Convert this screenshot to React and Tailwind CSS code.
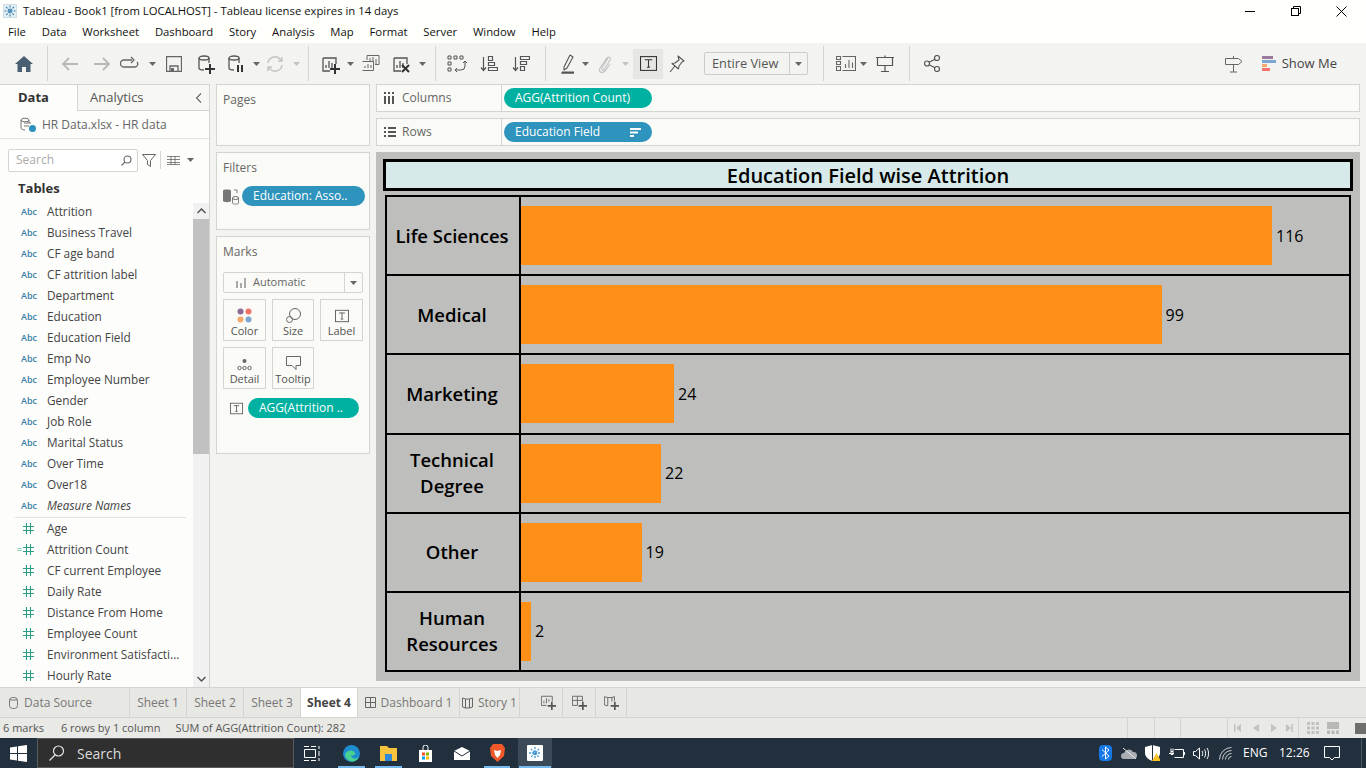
import React from "react";

const FIELDS_TOP = ["Attrition", "Business Travel", "CF age band", "CF attrition label", "Department", "Education", "Education Field", "Emp No", "Employee Number", "Gender", "Job Role", "Marital Status", "Over Time", "Over18", "Measure Names"];
const FIELDS_BOTTOM = ["Age", "Attrition Count", "CF current Employee", "Daily Rate", "Distance From Home", "Employee Count", "Environment Satisfacti...", "Hourly Rate"];
const MENU = ["File", "Data", "Worksheet", "Dashboard", "Story", "Analysis", "Map", "Format", "Server", "Window", "Help"];
const ROWS = [
  { label: ["Life Sciences"], value: 116 },
  { label: ["Medical"], value: 99 },
  { label: ["Marketing"], value: 24 },
  { label: ["Technical", "Degree"], value: 22 },
  { label: ["Other"], value: 19 },
  { label: ["Human", "Resources"], value: 2 },
];

/* ---------- small drawing helpers ---------- */
const Ico = ({ w = 20, h = 20, c = "#666", sw = 1.3, children }) => (
  <svg width={w} height={h} viewBox={`0 0 ${w} ${h}`} fill="none" stroke={c} strokeWidth={sw}>
    {children}
  </svg>
);

const Caret = ({ c = "#666" }) => (
  <svg width="7" height="4" viewBox="0 0 7 4"><path d="M0 0h7L3.5 4z" fill={c} /></svg>
);

const Tool = ({ className, children }) => (
  <div className={`flex h-full shrink-0 items-center justify-center ${className}`}>{children}</div>
);

const Sep = () => <div className="h-[35px] w-px shrink-0 bg-[#d4d4d0]" />;

const Cyl = ({ x = 3 }) => (
  <>
    <ellipse cx={x + 5} cy="4" rx="5" ry="2" />
    <path d={`M${x} 4v10c0 1 2 2 5 2M${x + 10} 4v5`} />
  </>
);

const Plus = ({ x, y, c = "#333" }) => <path d={`M${x - 5} ${y}h10M${x} ${y - 5}v10`} stroke={c} strokeWidth="2" />;

const Bars = ({ x = 3, y = 4 }) => (
  <path d={`M${x} ${y}v13h7M${x} ${y}h13v6M${x + 3} ${y + 10}v-3M${x + 6} ${y + 10}v-7M${x + 9} ${y + 10}v-5`} />
);

const TBox = ({ s = 16, c = "#555" }) => (
  <svg width={s} height={s} viewBox="0 0 16 16" fill="none" stroke={c}>
    <rect x="0.5" y="1.5" width="15" height="13" />
    <path d="M5 5V4.500h6V5M8 4.500v7M6.500 11.500h3" />
  </svg>
);

const Hash = () => (
  <svg width="11" height="11" viewBox="0 0 11 11" stroke="#2d9c86" strokeWidth="1.1">
    <path d="M3.500 0v11M7.500 0v11M0 3.500h11M0 7.500h11" />
  </svg>
);

/* ---------- top chrome ---------- */
const TitleBar = () => (
  <div className="flex h-[22px] items-center bg-[#fffffc] pl-[3px] text-[11.3px] text-[#111]">
    <svg width="14" height="14" viewBox="0 0 14 14" stroke="#2f7fae" strokeWidth="1.1">
      <rect x="0.500" y="0.500" width="13" height="13" fill="#e4eef5" stroke="#cfdde8" />
      <path d="M7 1.500v11M1.500 7h11M3 3l8 8M11 3l-8 8" strokeDasharray="2 1" />
    </svg>
    <span className="ml-[6px]">Tableau - Book1 [from LOCALHOST] - Tableau license expires in 14 days</span>
    <div className="ml-auto flex items-center">
      <div className="mr-[36px] h-px w-[10px] bg-black" />
      <svg width="10" height="10" viewBox="0 0 10 10" fill="none" stroke="#000" className="mr-[35px]">
        <rect x="0.500" y="2.500" width="7" height="7" />
        <path d="M2.500 2.500v-2h7v7h-2" />
      </svg>
      <svg width="11" height="11" viewBox="0 0 11 11" stroke="#000" className="mr-[19px]"><path d="M0.500 0.500l10 10M10.500 0.500l-10 10" /></svg>
    </div>
  </div>
);

const MenuBar = () => (
  <div className="flex h-[21px] items-center gap-[15.8px] bg-[#fffffc] pl-[8px] text-[11.3px] text-[#111]">
    {MENU.map((m) => <span key={m}>{m}</span>)}
  </div>
);

const Toolbar = () => (
  <div className="flex h-[41px] items-center bg-[#f3f3f1]">
    <Tool className="w-[47px]">
      <svg width="18" height="16" viewBox="0 0 18 16"><path d="M9 0L0 8h2.500v8H7v-5h4v5h4.500V8H18z" fill="#4a6072" /></svg>
    </Tool>
    <Sep />
    <Tool className="w-[44px]">
      <Ico c="#b8b8b8" sw="1.800"><path d="M18 10H3M9 4l-6 6 6 6" /></Ico>
    </Tool>
    <Tool className="w-[20px]">
      <Ico c="#b8b8b8" sw="1.800"><path d="M2 10h15M11 4l6 6-6 6" /></Ico>
    </Tool>
    <Tool className="w-[36px]">
      <Ico><path d="M12 6H4a3 3 0 000 7h11a3 3 0 002-5M11 3l3 3-3 3" /></Ico>
    </Tool>
    <Tool className="w-[8px]"><Caret /></Tool>
    <Tool className="w-[36px]">
      <Ico w={16} h={16}><path d="M.5.500h15v15H.5zM4 15.500V10h8v5.500" /><rect x="5" y="12" width="3" height="3.500" fill="#666" stroke="none" /></Ico>
    </Tool>
    <Tool className="w-[28px]">
      <Ico c="#555"><Cyl /><Plus x={14} y={15} /></Ico>
    </Tool>
    <Tool className="w-[32px]">
      <Ico c="#555"><Cyl /><path d="M12 11v7M16 11v7" stroke="#333" strokeWidth="2" /></Ico>
    </Tool>
    <Tool className="w-[8px]"><Caret /></Tool>
    <Tool className="w-[30px]">
      <Ico c="#c4c4c4" sw="1.500"><path d="M3 9a7 7 0 0112-4l2 2M17 11a7 7 0 01-12 4l-2-2M17 3v4h-4M3 17v-4h4" /></Ico>
    </Tool>
    <Tool className="w-[12px]"><Caret c="#c4c4c4" /></Tool>
    <Tool className="w-[6px]" />
    <Sep />
    <Tool className="w-[37px] justify-end pr-[4px]">
      <Ico w={22} h={20} c="#555"><Bars /><Plus x={15} y={15} /></Ico>
    </Tool>
    <Tool className="w-[8px]"><Caret /></Tool>
    <Tool className="w-[34px]">
      <Ico w={18} h={18} c="#666" sw="1"><path d="M5 5V.5h12v9h-4M.5 6.500h11v9H.5M8 6V3M11 7V2M14 9V4M3 13v-2M6 13v-4M9 13v-3" /></Ico>
    </Tool>
    <Tool className="w-[28px]">
      <Ico w={22} h={20} c="#555"><Bars /><path d="M11 11l7 7M18 11l-7 7" stroke="#333" strokeWidth="2" /></Ico>
    </Tool>
    <Tool className="w-[12px]"><Caret /></Tool>
    <Tool className="w-[7px]" />
    <Sep />
    <Tool className="w-[42px]">
      <Ico w={20} h={18} c="#555" sw="1"><path d="M1 1h3v3H1zM7 1h3v3H7zM13 1h3v3h-3zM1 7h3v3H1zM1 13h3v3H1zM18 6v5a4 4 0 01-4 4H8M10 13l-2 2 2 2M16 8l2-2 2 2" /></Ico>
    </Tool>
    <Tool className="w-[22px]">
      <Ico w={18} h={18} c="#555" sw="1.200"><path d="M3.500 2v13M1 12.500l2.500 3 2.500-3M8.500 1.500h4v4h-4zM8.500 7.500h6v3h-6zM8.500 12.500h9v3h-9z" /></Ico>
    </Tool>
    <Tool className="w-[42px]">
      <Ico w={18} h={18} c="#555" sw="1.200"><path d="M3.500 2v13M1 12.500l2.500 3 2.500-3M8.500 1.500h9v3h-9zM8.500 6.500h6v3h-6zM8.500 11.500h4v4h-4z" /></Ico>
    </Tool>
    <Tool className="w-[3px]" />
    <Sep />
    <Tool className="w-[35px] justify-end pr-[6px]">
      <Ico w={14} h={20} c="#555" sw="1.100"><path d="M3 13L9 1l3 2-6 11-3 2zM0 19h13" strokeLinejoin="round" /><path d="M1 18.500h12" strokeWidth="2" /></Ico>
    </Tool>
    <Tool className="w-[8px]"><Caret /></Tool>
    <Tool className="w-[32px]">
      <Ico w={14} h={18} c="#c4c4c4" sw="1.200"><path d="M10 3L4 13c-1 2 1 3 2 2l6-10c1-2-1-4-3-2L2 13c-2 4 2 6 5 3l5-7" /></Ico>
    </Tool>
    <Tool className="w-[8px]"><Caret c="#c4c4c4" /></Tool>
    <Tool className="ml-[4px] !h-[30px] w-[30px] bg-[#e6e6e3]">
      <TBox s={17} c="#333" />
    </Tool>
    <Tool className="w-[28px]">
      <Ico w={16} h={18} c="#555" sw="1.100"><path d="M9 1l6 5-2 1-3 4-.5 3L3 8.500l3-.5 4-3zM6 11l-5 6" strokeLinejoin="round" /></Ico>
    </Tool>
    <div className="ml-[13px] flex h-[23px] w-[104px] shrink-0 items-center rounded-[2px] border border-[#ccc] text-[12.8px] text-[#555]">
      <span className="flex-1 pl-[7px]">Entire View</span>
      <span className="flex h-full w-[18px] items-center justify-center border-l border-[#ccc]"><Caret /></span>
    </div>
    <div className="w-[15px] shrink-0" />
    <Sep />
    <Tool className="w-[32px] justify-end">
      <Ico w={20} h={15} c="#666" sw="1"><path d="M.5.500h4v3h-4zM.5 5.500h4v3h-4zM.5 10.500h4v4h-4zM6.500.500h13v14h-13M9.500 12V8M13 12V4M16.500 12V6.500" strokeWidth="1.100" /></Ico>
    </Tool>
    <Tool className="w-[11px] justify-end"><Caret /></Tool>
    <Tool className="w-[36px]">
      <Ico w={18} h={18} c="#555" sw="1.200"><path d="M0 2.500h18M1.500 2.500v8h15v-8M9 .5v2M9 10.500v6M5 16.500h8" /></Ico>
    </Tool>
    <div className="w-[6px] shrink-0" />
    <Sep />
    <Tool className="w-[44px]">
      <Ico w={16} h={17} c="#555" sw="1.200"><circle cx="3" cy="8.500" r="2.500" /><circle cx="13" cy="3" r="2.500" /><circle cx="13" cy="14" r="2.500" /><path d="M5 7.200l6-3M5 9.800l6 3" /></Ico>
    </Tool>
    <div className="ml-auto mr-[29px] flex items-center">
      <Ico w={18} h={18} c="#666" sw="1"><path d="M.5 3.500h13l3.500 3-3.500 3H.5zM8.500 1v2.500M8.500 9.500V17M5 17h7" /></Ico>
      <svg width="14" height="16" viewBox="0 0 14 16" className="ml-[19px]">
        <rect y="0" width="11" height="3" fill="#9b7a9e" />
        <rect y="4" width="14" height="3" fill="#7ca6d2" />
        <rect y="8" width="5" height="3" fill="#f5a76c" />
        <rect y="12" width="8" height="3" fill="#f27469" />
      </svg>
      <span className="ml-[6px] text-[13px] text-[#444]">Show Me</span>
    </div>
  </div>
);

/* ---------- data pane ---------- */
const FieldRow = ({ name, type, italic }) => (
  <div className="flex h-[21px] items-center text-[11.8px] text-[#444]">
    {type === "abc" ? (
      <div className="flex w-[47px] shrink-0 items-center justify-end pr-[10px]">
        <span className="text-[9px] font-semibold text-[#3b7ea8]">Abc</span>
      </div>
    ) : (
      <div className="flex w-[47px] shrink-0 items-center justify-end pr-[13px]">
        {type === "calc" && <span className="mr-px text-[9px] leading-none text-[#2d9c86]">=</span>}
        <Hash />
      </div>
    )}
    <span className={italic ? "italic" : ""}>{name}</span>
  </div>
);

const DataPane = () => (
  <div className="flex h-full w-[210px] shrink-0 flex-col border-r border-t border-[#d4d4d0] bg-[#fdfdfb]">
    <div className="flex h-[26px] shrink-0 items-stretch text-[13px]">
      <div className="flex w-[78px] items-center border-r border-[#d4d4d0] pl-[18px] font-bold text-[#333]">Data</div>
      <div className="flex flex-1 items-center justify-between border-b border-[#d4d4d0] bg-[#f7f7f4] pl-[12px] pr-[7px] text-[#555]">
        <span>Analytics</span>
        <svg width="7" height="10" viewBox="0 0 7 10" fill="none" stroke="#666" strokeWidth="1.100"><path d="M6 .5L1.500 5 6 9.500" /></svg>
      </div>
    </div>
    <div className="flex h-[28px] shrink-0 items-center border-b border-[#e2e2de] pl-[20px] text-[12px] text-[#666]">
      <svg width="17" height="16" viewBox="0 0 17 16" fill="none" stroke="#666" strokeWidth="0.900">
        <ellipse cx="5" cy="3" rx="4" ry="1.800" />
        <path d="M1 3v8c0 1 2 2 4 2M9 3v3M4 6h7M4 9h5" />
        <circle cx="12.500" cy="11.500" r="3.500" fill="#2f8fbd" stroke="none" />
      </svg>
      <span className="ml-[5px]">HR Data.xlsx - HR data</span>
    </div>
    <div className="flex h-[40px] shrink-0 items-center pl-[8px] pt-[2px]">
      <div className="flex h-[23px] w-[130px] items-center justify-between rounded-[2px] border border-[#d4d4d0] bg-white pl-[7px] pr-[5px] text-[12px] text-[#aaa]">
        <span>Search</span>
        <svg width="11" height="11" viewBox="0 0 11 11" fill="none" stroke="#666" strokeWidth="1.100"><circle cx="6.500" cy="4.500" r="3.500" /><path d="M4 7L.5 10.500" /></svg>
      </div>
      <svg width="14" height="13" viewBox="0 0 14 13" fill="none" stroke="#666" className="ml-[4px]"><path d="M.5.500h13L8.500 6.500v6l-3-2v-4z" /></svg>
      <div className="ml-[4px] h-[18px] w-px bg-[#d4d4d0]" />
      <svg width="13" height="9" viewBox="0 0 13 9" stroke="#666" className="ml-[6px]"><path d="M0 .5h13M0 3.500h13M0 6.500h13M0 8.500h13M4 0v9M8 0v9" strokeWidth="0.800" /></svg>
      <span className="ml-[7px]"><Caret /></span>
    </div>
    <div className="flex min-h-0 flex-1">
      <div className="min-w-0 flex-1 overflow-hidden">
        <div className="h-[22px] pl-[18px] text-[13px] font-bold leading-[18px] text-[#333]">Tables</div>
        <div>
          {FIELDS_TOP.map((f, i) => <FieldRow key={f} name={f} type="abc" italic={i === 14} />)}
        </div>
        <div className="ml-[15px] mr-[7px] mt-px h-px bg-[#e2e2de]" />
        <div>
          {FIELDS_BOTTOM.map((f) => <FieldRow key={f} name={f} type={f === "Attrition Count" ? "calc" : "num"} />)}
        </div>
      </div>
      <div className="mt-[24px] flex w-[16px] shrink-0 flex-col bg-[#f1f1f1]">
        <div className="flex h-[16px] items-center justify-center"><svg width="9" height="6" viewBox="0 0 9 6" fill="none" stroke="#555" strokeWidth="1.500"><path d="M.5 5L4.500 1l4 4" /></svg></div>
        <div className="h-[235px] bg-[#c1c1c1]" />
        <div className="mt-auto flex h-[16px] items-center justify-center"><svg width="9" height="6" viewBox="0 0 9 6" fill="none" stroke="#555" strokeWidth="1.500"><path d="M.5 1l4 4 4-4" /></svg></div>
      </div>
    </div>
  </div>
);

/* ---------- cards ---------- */
const Card = ({ className, children }) => (
  <div className={`border border-[#d4d4d0] bg-[#fafaf6] ${className}`}>{children}</div>
);

const Pill = ({ color, className, children }) => (
  <div className={`flex h-[20px] items-center rounded-full pl-[11px] text-[12px] text-white ${color} ${className}`}>{children}</div>
);

const MarkBtn = ({ label, children }) => (
  <div className="flex h-[42px] flex-col items-center border border-[#d4d4d0] text-[11px] text-[#555]">
    <div className="flex h-[23px] items-end justify-center">{children}</div>
    <span className="mt-[1px] leading-[14px]">{label}</span>
  </div>
);

const CardsColumn = () => (
  <div className="flex w-[154px] shrink-0 flex-col gap-[6px]">
    <Card className="h-[62px] pl-[6px] pt-[6px] text-[12px] text-[#666]">Pages</Card>
    <Card className="h-[78px] px-[6px] pt-[6px] text-[12px] text-[#666]">
      <div>Filters</div>
      <div className="mt-[9px] flex items-center">
        <svg width="17" height="17" viewBox="0 0 17 17" fill="none" stroke="#666" className="mr-[2px] shrink-0">
          <path d="M0 2.500C0 1 8 1 8 2.500V13C8 14.500 0 14.500 0 13z" fill="#777" stroke="none" />
          <ellipse cx="12.500" cy="10" rx="3" ry="1.500" />
          <path d="M9.500 10v5c0 1.500 6 1.500 6 0v-5M11 2h3v3" strokeWidth="0.800" />
        </svg>
        <Pill color="bg-[#2e93bd]" className="w-[123px] shrink-0">Education: Asso..</Pill>
      </div>
    </Card>
    <Card className="h-[218px] px-[6px] pt-[6px] text-[12px] text-[#666]">
      <div>Marks</div>
      <div className="mt-[11px] flex h-[21px] w-[140px] items-center rounded-[2px] border border-[#d4d4d0] text-[11px]">
        <svg width="10" height="10" viewBox="0 0 10 10" fill="#aaa" className="ml-[12px]"><rect y="3" width="2" height="7" /><rect x="4" y="5" width="2" height="5" /><rect x="8" y="0" width="2" height="10" /></svg>
        <span className="ml-[7px] flex-1">Automatic</span>
        <span className="flex h-full w-[18px] items-center justify-center border-l border-[#d4d4d0]"><Caret /></span>
      </div>
      <div className="mt-[6px] grid w-[140px] grid-cols-[43px_42px_43px] gap-x-[6px] gap-y-[6px]">
        <MarkBtn label="Color">
          <svg width="15" height="15" viewBox="0 0 15 15"><circle cx="3.500" cy="3.500" r="3" fill="#8d6a93" /><circle cx="11.500" cy="3.500" r="3" fill="#f27469" /><circle cx="3.500" cy="11.500" r="3" fill="#f5a76c" /><circle cx="11.500" cy="11.500" r="3" fill="#7ca6d2" /></svg>
        </MarkBtn>
        <MarkBtn label="Size">
          <svg width="15" height="15" viewBox="0 0 15 15" fill="none" stroke="#666"><circle cx="9" cy="6" r="5.500" /><circle cx="3.500" cy="11.500" r="3" /></svg>
        </MarkBtn>
        <MarkBtn label="Label"><TBox s={14} /></MarkBtn>
        <MarkBtn label="Detail">
          <svg width="15" height="12" viewBox="0 0 15 12" fill="none" stroke="#666"><circle cx="7.500" cy="2" r="2" fill="#666" stroke="none" /><circle cx="2.500" cy="9" r="1.700" /><circle cx="7.500" cy="9" r="1.700" /><circle cx="12.500" cy="9" r="1.700" /></svg>
        </MarkBtn>
        <MarkBtn label="Tooltip">
          <svg width="15" height="15" viewBox="0 0 15 15" fill="none" stroke="#666"><path d="M.5.500h14v9H10v4l-4-4H.5z" /></svg>
        </MarkBtn>
      </div>
      <div className="mt-[9px] flex items-center pl-[7px]">
        <TBox s={13} />
        <Pill color="bg-[#00b0a0]" className="ml-[5px] w-[111px]">AGG(Attrition ..</Pill>
      </div>
    </Card>
  </div>
);

/* ---------- shelves + viz ---------- */
const Shelf = ({ icon, label, className, children }) => (
  <Card className={`flex h-[28px] items-stretch ${className}`}>
    <div className="flex w-[125px] items-center border-r border-[#d4d4d0] text-[12px] text-[#666]">
      <span className="flex w-[25px] justify-center">{icon}</span>
      {label}
    </div>
    <div className="flex items-center pl-[2px]">{children}</div>
  </Card>
);

const Chart = () => (
  <div className="mt-[6px] flex h-[529px] flex-col bg-[#bebebc] px-[7px] pt-[7px] text-black">
    <div className="flex h-[32px] items-center justify-center border-[3px] border-black bg-[#d7eae9] pt-px text-[20px] font-semibold leading-none">
      Education Field wise Attrition
    </div>
    <div className="mx-[2px] mt-[4px] flex h-[477px] flex-col border-[2px] border-black">
      {ROWS.map((r, i) => (
        <div key={i} className={`flex flex-1 items-stretch ${i > 0 ? "border-t-[2px] border-black" : ""}`}>
          <div className="flex w-[132px] shrink-0 flex-col items-center justify-center pr-[2px] text-center text-[18.5px] font-semibold leading-[26px]">
            {r.label.map((l) => <span key={l}>{l}</span>)}
          </div>
          <div className="flex flex-1 items-center border-l-[2px] border-black">
            <div className="h-[59px] bg-[#ff8f17]" style={{ width: r.value * 6.5 - 3 }} />
            <span className="ml-[4px] text-[16px] font-medium leading-none">{r.value}</span>
          </div>
        </div>
      ))}
    </div>
  </div>
);

const Workspace = () => (
  <div className="ml-[6px] mr-[6px] flex min-w-0 flex-1 flex-col">
    <Shelf
      label="Columns"
      icon={<svg width="11" height="12" viewBox="0 0 11 12" fill="#555"><rect width="2" height="2" /><rect x="4" width="2" height="2" /><rect x="8" width="2" height="2" /><rect y="4" width="2" height="8" /><rect x="4" y="4" width="2" height="8" /><rect x="8" y="4" width="2" height="8" /></svg>}
    >
      <Pill color="bg-[#00b0a0]" className="w-[148px]">AGG(Attrition Count)</Pill>
    </Shelf>
    <Shelf
      className="mt-[6px]"
      label="Rows"
      icon={<svg width="12" height="10" viewBox="0 0 12 10" fill="#555"><rect width="2" height="2" /><rect x="4" width="8" height="2" /><rect y="4" width="2" height="2" /><rect x="4" y="4" width="8" height="2" /><rect y="8" width="2" height="2" /><rect x="4" y="8" width="8" height="2" /></svg>}
    >
      <Pill color="bg-[#2e93bd]" className="w-[148px]">
        <span className="flex-1">Education Field</span>
        <svg width="11" height="9" viewBox="0 0 11 9" fill="#fff" className="mr-[11px]"><rect width="11" height="2" /><rect y="3.500" width="8" height="2" /><rect y="7" width="4" height="2" /></svg>
      </Pill>
    </Shelf>
    <Chart />
  </div>
);

/* ---------- bottom ---------- */
const Tab = ({ className, active, children }) => (
  <div className={`flex h-full shrink-0 items-center justify-center gap-[5px] border-r border-[#d4d4d0] text-[12px] ${active ? "bg-white font-bold text-[#444]" : "text-[#777]"} ${className}`}>
    {children}
  </div>
);

const AddIcon = ({ children }) => (
  <svg width="15" height="15" viewBox="0 0 18 18" fill="none" stroke="#666" strokeWidth="1.100">
    {children}
    <Plus x={13} y={13} c="#555" />
  </svg>
);

const SheetTabs = () => (
  <div className="flex h-[30px] border-t border-[#d4d4d0] bg-[#e7e7e3]">
    <Tab className="w-[130px] !justify-start gap-[6px] pl-[9px]">
      <svg width="9" height="12" viewBox="0 0 9 12" fill="none" stroke="#777"><rect x="0.500" y="0.500" width="8" height="11" rx="3" /><path d="M.5 3h8" /></svg>
      Data Source
    </Tab>
    <Tab className="w-[57px]">Sheet 1</Tab>
    <Tab className="w-[57px]">Sheet 2</Tab>
    <Tab className="w-[57px]">Sheet 3</Tab>
    <Tab className="w-[57px]" active>Sheet 4</Tab>
    <Tab className="w-[102px]">
      <svg width="11" height="11" viewBox="0 0 11 11" fill="none" stroke="#666"><path d="M.5.500h10v10H.5zM.5 5.500h10M5.500.5v10" /></svg>
      Dashboard 1
    </Tab>
    <Tab className="w-[60px]">
      <svg width="11" height="12" viewBox="0 0 11 12" fill="none" stroke="#666"><path d="M.5 1l3 1v9l-3-1zM3.500 2h4v9h-4M7.500 2l3-1v9l-3 1" /></svg>
      Story 1
    </Tab>
    <Tab className="w-[43px] pl-[14px]"><AddIcon><path d="M.5 1.500h13v6M.5 1.500v11h6M3.500 10V7M6.500 10V4M9.500 8V5" /></AddIcon></Tab>
    <Tab className="w-[33px]"><AddIcon><path d="M.5 1.500h12v6M.5 1.500v11h6M.5 6.500h12M6.500 1.500v11" /></AddIcon></Tab>
    <Tab className="w-[31px]"><AddIcon><path d="M.5 2l4 1v10l-4-1zM4.500 3h5v5M9.500 3l3-1v5" /></AddIcon></Tab>
  </div>
);

const StatusBar = () => (
  <div className="flex h-[21px] items-center border-t border-[#d4d4d0] bg-[#e9e9e5] pl-[3px] text-[11px] text-[#555]">
    <span>6 marks</span>
    <span className="ml-[17px]">6 rows by 1 column</span>
    <span className="ml-[15px]">SUM of AGG(Attrition Count): 282</span>
    <div className="ml-auto flex h-full items-stretch">
      <div className="w-[27px] border-l border-[#d4d4d0]" />
      <div className="w-[26px] border-l border-[#d4d4d0]" />
      <div className="w-[47px] border-l border-[#d4d4d0]" />
      <div className="flex w-[71px] items-center justify-center gap-[9px] border-l border-[#d4d4d0]">
        <svg width="7" height="8" viewBox="0 0 7 8" fill="#c2c2be"><rect width="1.500" height="8" /><path d="M7 0v8L2 4z" /></svg>
        <svg width="6" height="8" viewBox="0 0 6 8" fill="#c2c2be" className="ml-[3px]"><path d="M6 0v8L0 4z" /></svg>
        <svg width="6" height="8" viewBox="0 0 6 8" fill="#c2c2be" className="ml-[3px]"><path d="M0 0v8l6-4z" /></svg>
        <svg width="7" height="8" viewBox="0 0 7 8" fill="#c2c2be"><rect x="5.500" width="1.500" height="8" /><path d="M0 0v8l5-4z" /></svg>
      </div>
      <div className="flex w-[68px] items-center gap-[8px] border-l border-[#d4d4d0] pl-[8px]">
        <svg width="12" height="12" viewBox="0 0 12 12" fill="#c2c2be"><rect width="3" height="3" /><rect x="4.500" width="3" height="3" /><rect x="9" width="3" height="3" /><rect y="4.500" width="3" height="3" /><rect x="4.500" y="4.500" width="3" height="3" /><rect x="9" y="4.500" width="3" height="3" /><rect y="9" width="3" height="3" /><rect x="4.500" y="9" width="3" height="3" /><rect x="9" y="9" width="3" height="3" /></svg>
        <svg width="12" height="12" viewBox="0 0 12 12" fill="#b8b8b4"><rect width="12" height="7" /><rect y="8.500" width="3" height="3.500" /><rect x="4.500" y="8.500" width="3" height="3.500" /><rect x="9" y="8.500" width="3" height="3.500" /></svg>
        <div className="ml-[8px] h-[11px] w-[11px] bg-[#6e6e6a]" />
      </div>
    </div>
  </div>
);

const TaskApp = ({ className, running, children }) => (
  <div className={`relative flex h-full shrink-0 items-center justify-center ${className}`}>
    {children}
    {running && <div className="absolute bottom-0 left-[1px] right-[1px] h-[2px] bg-[#76b9ed]" />}
  </div>
);

const Taskbar = () => (
  <div className="flex h-[30px] items-center bg-[#222f3c] text-white">
    <TaskApp className="w-[37px]">
      <svg width="17" height="17" viewBox="0 0 17 17" fill="#fff"><path d="M0 2.500l7-1v6.500H0zM8 1.300L17 0v8H8zM0 9h7v6.500l-7-1zM8 9h9v8l-9-1.300z" /></svg>
    </TaskApp>
    <div className="flex h-full w-[257px] shrink-0 items-center border border-[#5b5b5b] bg-[#2f2f2f] pl-[11px] text-[14px] text-[#dcdcdc]">
      <svg width="16" height="16" viewBox="0 0 16 16" fill="none" stroke="#e6e6e6" strokeWidth="1.200"><circle cx="9.500" cy="6" r="5" /><path d="M6 10l-5.500 5.500" /></svg>
      <span className="ml-[12px]">Search</span>
    </div>
    <TaskApp className="w-[36px]">
      <svg width="16" height="15" viewBox="0 0 16 15" fill="none" stroke="#fff"><path d="M.5 3.500h11v8H.5zM0 .5h5M7 .5h5M0 14.500h5M7 14.500h5M15 0v3M15 5v5M15 12v3" /></svg>
    </TaskApp>
    <TaskApp className="ml-[7px] w-[29px]" running>
      <svg width="17" height="17" viewBox="0 0 17 17"><circle cx="8.500" cy="8.500" r="8.500" fill="#1e8dcf" /><path d="M2 10c1-5 8-6 10-2 1 2-2 3-4 2 0 3 4 5 8 2-2 5-9 6-12 2-1-1-2-3-2-4z" fill="#4ad18f" /></svg>
    </TaskApp>
    <TaskApp className="ml-[8px] w-[29px]" running>
      <svg width="17" height="15" viewBox="0 0 17 15"><path d="M0 0h7l2 2h8v13H0z" fill="#f8c33c" /><rect x="5" y="8" width="7" height="7" fill="#2f88d8" /></svg>
    </TaskApp>
    <TaskApp className="ml-[7px] w-[30px]">
      <svg width="15" height="17" viewBox="0 0 15 17"><path d="M1 5h13v12H1z" fill="#fff" /><path d="M5 5V2.500a2.500 2.500 0 015 0V5" fill="none" stroke="#fff" /><rect x="4" y="7.500" width="3" height="3" fill="#f25022" /><rect x="8" y="7.500" width="3" height="3" fill="#7fba00" /><rect x="4" y="11.500" width="3" height="3" fill="#00a4ef" /><rect x="8" y="11.500" width="3" height="3" fill="#ffb900" /></svg>
    </TaskApp>
    <TaskApp className="ml-[7px] w-[29px]">
      <svg width="16" height="13" viewBox="0 0 16 13"><path d="M0 4l8-4 8 4v9H0z" fill="#fff" /><path d="M0 4l8 5 8-5" fill="none" stroke="#222f3c" /></svg>
    </TaskApp>
    <TaskApp className="ml-[7px] w-[28px]" running>
      <svg width="15" height="18" viewBox="0 0 15 18"><path d="M3 0h9l3 4-1 8-6.500 6L1 12 0 4z" fill="#f1592a" /><path d="M4 6l3.500 1L11 6l-1 5-2.500 3L5 11z" fill="#fff" /></svg>
    </TaskApp>
    <TaskApp className="ml-[7px] w-[34px] bg-[#3c4a58]" running>
      <svg width="16" height="16" viewBox="0 0 16 16" stroke="#3f97d6" strokeWidth="1.300" className="rounded-[1px] bg-white">
        <path d="M8 2v12M2 8h12M4 4l8 8M12 4l-8 8" strokeDasharray="2 1" />
      </svg>
    </TaskApp>
    <div className="ml-auto flex h-full items-center pr-[4px]">
      <svg width="13" height="16" viewBox="0 0 13 16" className="rounded-[4px] bg-[#1478e6]"><path d="M3 4.500l7 6.500-3.500 3V2L10 5l-7 6.500" fill="none" stroke="#fff" /></svg>
      <svg width="16" height="11" viewBox="0 0 16 11" className="ml-[9px]"><path d="M3 11a3 3 0 010-6 5 5 0 019-1 3.500 3.500 0 011 7z" fill="#a8aeb4" /><path d="M2 0l13 11" stroke="#e8e8e8" /></svg>
      <svg width="15" height="16" viewBox="0 0 15 16" className="ml-[8px]"><path d="M7.500 0L15 2v6c0 4-4 7-7.500 8C4 15 0 12 0 8V2z" fill="#fff" /><path d="M7.500 0v16" stroke="#222f3c" /><path d="M11.500 8l4.500 8H7z" fill="#f7c325" /></svg>
      <svg width="16" height="11" viewBox="0 0 16 11" fill="none" stroke="#fff" className="ml-[9px]"><path d="M5.500 1.500h9v8h-9M15.500 4v3M0 5.500h5M2 .5v3M4 .5v3M2 3.500h2v3H2z" /></svg>
      <svg width="16" height="13" viewBox="0 0 16 13" fill="none" stroke="#fff" className="ml-[8px]"><path d="M.5 4.500h2L6.500 1v11l-4-3.500h-2zM9 4c1 1.500 1 3.500 0 5M11.500 2.500c1.500 2.500 1.500 5.500 0 8M14 1c2 3 2 8 0 11" /></svg>
      <svg width="14" height="13" viewBox="0 0 14 13" fill="none" stroke="#c9ccd0" className="ml-[10px]"><path d="M.5 12.500a12 12 0 0112-12M3.500 12.500a9 9 0 019-9M6.500 12.500a6 6 0 016-6M9.500 12.500a3 3 0 013-3" /></svg>
      <span className="ml-[10px] w-[26px] text-[12px]">ENG</span>
      <span className="ml-[10px] w-[28px] text-[12px]">12:26</span>
      <svg width="16" height="15" viewBox="0 0 16 15" fill="none" stroke="#fff" className="ml-[17px]"><path d="M.5.500h15v11h-5l-2.500 2.500-2.500-2.500h-5z" /></svg>
      <div className="ml-[21px] h-full w-px bg-[#4a5661]" />
    </div>
  </div>
);

export default function App() {
  return (
    <div className="flex h-[768px] w-[1366px] flex-col overflow-hidden bg-[#f3f3f1] [font-family:'Open_Sans',sans-serif]">
      <TitleBar />
      <MenuBar />
      <Toolbar />
      <div className="flex min-h-0 flex-1">
        <DataPane />
        <div className="ml-[6px]"><CardsColumn /></div>
        <Workspace />
      </div>
      <SheetTabs />
      <StatusBar />
      <Taskbar />
    </div>
  );
}
